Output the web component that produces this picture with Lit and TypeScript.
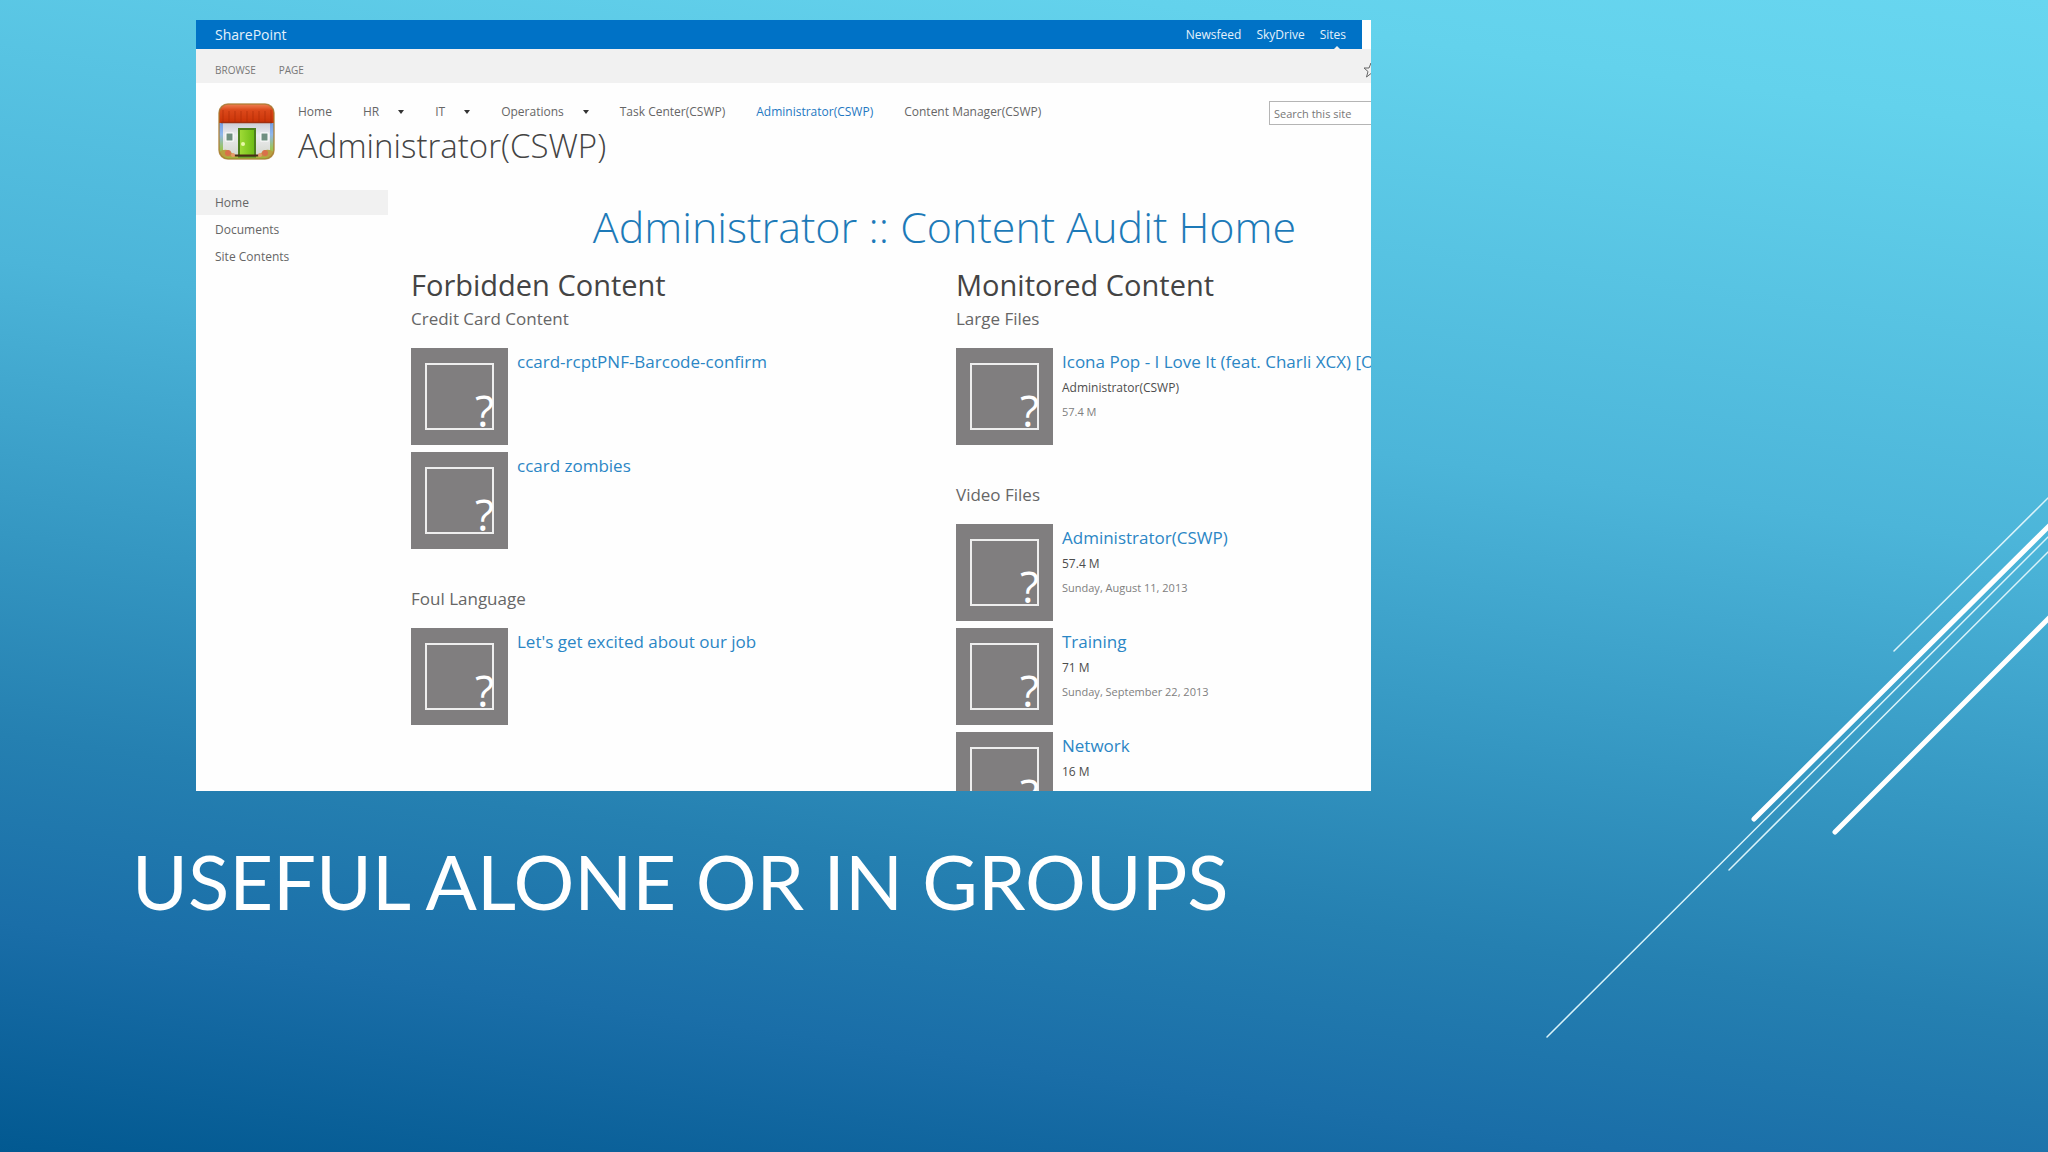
import { LitElement, html, svg, css, nothing } from "lit";
import { customElement, property } from "lit/decorators.js";

interface Result {
  title: string;
  line1?: string;
  line2?: string;
}

interface Group {
  name: string;
  items: Result[];
}

interface Column {
  title: string;
  groups: Group[];
}

const NAV: { label: string; menu?: boolean; current?: boolean }[] = [
  { label: "Home" },
  { label: "HR", menu: true },
  { label: "IT", menu: true },
  { label: "Operations", menu: true },
  { label: "Task Center(CSWP)" },
  { label: "Administrator(CSWP)", current: true },
  { label: "Content Manager(CSWP)" },
];

const SIDE = ["Home", "Documents", "Site Contents"];

const COLUMNS: Column[] = [
  {
    title: "Forbidden Content",
    groups: [
      {
        name: "Credit Card Content",
        items: [{ title: "ccard-rcptPNF-Barcode-confirm" }, { title: "ccard zombies" }],
      },
      { name: "Foul Language", items: [{ title: "Let's get excited about our job" }] },
    ],
  },
  {
    title: "Monitored Content",
    groups: [
      {
        name: "Large Files",
        items: [
          {
            title: "Icona Pop - I Love It (feat. Charli XCX) [O",
            line1: "Administrator(CSWP)",
            line2: "57.4 M",
          },
        ],
      },
      {
        name: "Video Files",
        items: [
          { title: "Administrator(CSWP)", line1: "57.4 M", line2: "Sunday, August 11, 2013" },
          { title: "Training", line1: "71 M", line2: "Sunday, September 22, 2013" },
          { title: "Network", line1: "16 M" },
        ],
      },
    ],
  },
];

/* One search hit: placeholder thumbnail, linked title, up to two detail lines. */
@customElement("result-item")
export class ResultItem extends LitElement {
  @property({ attribute: false }) result!: Result;

  static styles = css`
    :host {
      display: flex;
      gap: 9px;
    }
    .thumb {
      flex: none;
      display: block;
      width: 97px;
      height: 97px;
      background: #807e7f;
    }
    .mark {
      font: 400 44px "Open Sans", "Noto Sans", sans-serif;
      fill: #fff;
    }
    .text {
      white-space: nowrap;
    }
    .title,
    .line1,
    .line2 {
      display: block;
      margin: 0;
      line-height: 24px;
    }
    .title {
      font-size: 17px;
      line-height: 28px;
      color: #2b86c5;
      text-decoration: none;
    }
    .line1 {
      font-size: 12px;
      color: #4d4d4d;
    }
    .line2 {
      font-size: 11px;
      color: #808080;
    }
  `;

  render() {
    const { title, line1, line2 } = this.result;
    return html`
      <svg class="thumb" viewBox="0 0 97 97" aria-hidden="true">
        <rect x="15" y="16" width="67" height="65" fill="none" stroke="#eeeeee" stroke-width="2" />
        <text class="mark" x="64" y="79">?</text>
      </svg>
      <div class="text">
        <a class="title" href="#">${title}</a>
        ${line1 ? html`<p class="line1">${line1}</p>` : nothing}
        ${line2 ? html`<p class="line2">${line2}</p>` : nothing}
      </div>
    `;
  }
}

const houseIcon = svg`
  <defs>
    <linearGradient id="roof" x1="0" y1="0" x2="0" y2="1">
      <stop offset="0" stop-color="#f08a5c" />
      <stop offset="0.35" stop-color="#dc4a1c" />
      <stop offset="1" stop-color="#c93206" />
    </linearGradient>
    <linearGradient id="sky" x1="0" y1="0" x2="0" y2="1">
      <stop offset="0" stop-color="#4b78d8" />
      <stop offset="0.55" stop-color="#8fb7ec" />
      <stop offset="0.8" stop-color="#9ac55a" />
      <stop offset="1" stop-color="#c2a038" />
    </linearGradient>
    <linearGradient id="wall" x1="0" y1="0" x2="0" y2="1">
      <stop offset="0" stop-color="#c9cbd4" />
      <stop offset="0.4" stop-color="#ececf0" />
      <stop offset="1" stop-color="#d5d8cf" />
    </linearGradient>
    <linearGradient id="door" x1="0" y1="0" x2="1" y2="0">
      <stop offset="0" stop-color="#a2dc38" />
      <stop offset="1" stop-color="#6cbb14" />
    </linearGradient>
    <clipPath id="tile"><rect x="1" y="1" width="55" height="55" rx="9" /></clipPath>
  </defs>
  <g clip-path="url(#tile)">
    <rect width="57" height="57" fill="url(#sky)" />
    <path d="M5 19H52V52H5Z" fill="url(#wall)" />
    <rect x="0" y="0" width="57" height="20" fill="url(#roof)" />
    <path d="M5 7V19M11 8V19M17 8V19M23 8V19M29 8V19M35 8V19M41 8V19M47 8V19M53 7V19" stroke="#a82a06" stroke-width="1" opacity="0.6" />
    <path d="M3 19.500H54" stroke="#a03010" stroke-width="1.500" />
    <rect x="8" y="30" width="7" height="8" fill="#6f8f80" stroke="#fff" />
    <rect x="43" y="30" width="7" height="8" fill="#6f8f80" stroke="#fff" />
    <rect x="21" y="26" width="16" height="28" fill="url(#door)" stroke="#4d7f1c" stroke-width="2" />
    <circle cx="25" cy="41" r="2" fill="#e8f8a8" />
    <path d="M14 52.500H44" stroke="#4a2c18" stroke-width="2" />
    <path d="M0 57V50Q8 43 15 51L20 57Z" fill="#b8a040" />
    <path d="M57 57V50Q49 43 42 51L37 57Z" fill="#b8a040" />
    <circle cx="10" cy="50" r="3" fill="#d9704a" />
    <circle cx="15" cy="52" r="2" fill="#e69a6a" />
    <circle cx="47" cy="50" r="3" fill="#d9704a" />
    <circle cx="42" cy="52" r="2" fill="#e69a6a" />
    <path d="M0 55.500H57" stroke="#8fc63c" stroke-width="2" />
  </g>
  <rect x="1" y="1" width="55" height="55" rx="9" fill="none" stroke="#a8782c" stroke-width="1.500" opacity="0.8" />
`;

@customElement("app-root")
export class AppRoot extends LitElement {
  static styles = css`
    :host {
      display: block;
    }
    .slide {
      position: relative;
      display: grid;
      grid-template-columns: 196fr 1175fr 677fr;
      grid-template-rows: 20fr 771fr 361fr;
      height: 100vh;
      overflow: hidden;
      background: linear-gradient(
        188deg,
        #68d6f0 0%,
        #63d2ec 9%,
        #4cb5d9 38%,
        #3597c2 57%,
        #2580b1 71%,
        #1a6ea8 84%,
        #025991 100%
      );
    }
    .rays {
      position: absolute;
      inset: 0;
      width: 100%;
      height: 100%;
      fill: none;
      stroke: #fff;
      stroke-linecap: round;
      pointer-events: none;
    }
    .thin {
      stroke: #d9f3fa;
      stroke-width: 1.5;
    }
    .thick {
      stroke-width: 5;
    }
    .shot {
      grid-area: 2 / 2;
      min-width: 0;
      overflow: hidden;
      background: #fefefe;
      color: #666;
      font: 12px/18px "Open Sans", "Noto Sans", sans-serif;
    }
    .page {
      width: calc(100% + 107px);
    }
    a {
      color: inherit;
      text-decoration: none;
    }
    .suite {
      display: flex;
      align-items: center;
      gap: 15px;
      height: 29px;
      margin-right: 116px;
      padding: 0 16px 0 19px;
      background: #0072c6;
      color: #e4f1fb;
      box-sizing: border-box;
    }
    .brand {
      margin-right: auto;
      font-size: 14px;
    }
    .active {
      position: relative;
    }
    .active::after {
      content: "";
      position: absolute;
      left: 50%;
      bottom: -6px;
      border: 4px solid transparent;
      border-top: 0;
      border-bottom-color: #f1f1f1;
    }
    .ribbon {
      display: flex;
      align-items: center;
      gap: 23px;
      height: 34px;
      box-sizing: border-box;
      padding: 8px 0 0 19px;
      background: #f1f1f1;
      font-size: 10px;
    }
    .tab {
      padding: 0;
      border: 0;
      background: none;
      color: #777;
      font: inherit;
    }
    .follow {
      margin-left: auto;
      margin-right: 99px;
      padding: 0;
      border: 0;
      background: none;
      line-height: 0;
    }
    .star {
      width: 16px;
      height: 16px;
      fill: none;
      stroke: #666;
    }
    .head {
      display: flex;
      gap: 23px;
      padding: 20px 0 19px 22px;
    }
    .logo {
      flex: none;
      width: 57px;
      height: 57px;
    }
    .grow {
      flex: 1;
    }
    .nav {
      display: flex;
      gap: 31px;
      white-space: nowrap;
    }
    .entry {
      display: flex;
      align-items: center;
      gap: 19px;
    }
    .caret {
      border: 3px solid transparent;
      border-top: 4px solid #333;
      border-bottom: 0;
    }
    .current {
      color: #1f78c2;
    }
    .site {
      margin: 0;
      font-size: 33px;
      line-height: 50px;
      font-weight: 300;
      color: #444;
    }
    .search {
      width: 209px;
      height: 24px;
      box-sizing: border-box;
      margin-top: -2px;
      padding: 0 4px;
      border: 1px solid #b5b5b5;
      background: #fff;
      font: 11px "Open Sans", "Noto Sans", sans-serif;
    }
    .search::placeholder {
      color: #777;
      opacity: 1;
    }
    .body {
      display: grid;
      grid-template-columns: 192px 1fr;
      column-gap: 23px;
    }
    .side {
      display: flex;
      flex-direction: column;
      gap: 2px;
    }
    .side-link {
      padding-left: 19px;
      line-height: 25px;
    }
    .here {
      background: #f1f1f1;
    }
    .main {
      padding-top: 8px;
    }
    .headline {
      margin: 0 0 10px;
      text-align: center;
      font-size: 43px;
      line-height: 58px;
      font-weight: 300;
      color: #1d7ab8;
    }
    .columns {
      display: grid;
      grid-template-columns: 1fr 1fr;
      column-gap: 23px;
    }
    .column {
      min-width: 0;
    }
    .section {
      margin: 0 0 2px;
      font-size: 29px;
      line-height: 37px;
      font-weight: 400;
      color: #444;
    }
    .group {
      display: flex;
      flex-direction: column;
      gap: 7px;
      margin-bottom: 36px;
    }
    .group-name {
      margin: 0 0 8px;
      font-size: 17px;
      line-height: 28px;
      font-weight: 400;
      color: #666;
    }
    .caption {
      grid-area: 3 / 1 / 4 / 4;
      margin: 0;
      padding: 42px 0 0 132px;
      font: 400 76px/96px Lato, "Open Sans", sans-serif;
      text-transform: uppercase;
      color: #fff;
    }
  `;

  private column(c: Column) {
    return html`
      <section class="column">
        <h3 class="section">${c.title}</h3>
        ${c.groups.map(
          (g) => html`
            <div class="group">
              <h4 class="group-name">${g.name}</h4>
              ${g.items.map((r) => html`<result-item .result=${r}></result-item>`)}
            </div>
          `,
        )}
      </section>
    `;
  }

  render() {
    return html`
      <main class="slide">
        <svg class="rays" viewBox="0 0 2048 1152" preserveAspectRatio="none" aria-hidden="true">
          <path class="thin" d="M1894 651L2050 496M1547 1037L2050 535M1729 870L2050 550" />
          <path class="thick" d="M1754 819L2050 525M1835 832L2050 617" />
        </svg>

        <div class="shot">
          <div class="page">
            <div class="suite">
              <a class="brand" href="#">SharePoint</a>
              <a href="#">Newsfeed</a>
              <a href="#">SkyDrive</a>
              <a class="active" href="#">Sites</a>
            </div>
            <div class="ribbon">
              <button class="tab" type="button">BROWSE</button>
              <button class="tab" type="button">PAGE</button>
              <button class="follow" type="button" aria-label="Follow">
                <svg class="star" viewBox="0 0 16 16">
                  <path d="M8 1L10 6H15L11 9.500L12.500 15L8 11.500L3.500 15L5 9.500L1 6H6Z" />
                </svg>
              </button>
            </div>
            <header class="head">
              <svg class="logo" viewBox="0 0 57 57" aria-hidden="true">${houseIcon}</svg>
              <div class="grow">
                <nav class="nav">
                  ${NAV.map(
                    (n) => html`
                      <a class="entry ${n.current ? "current" : ""}" href="#"
                        >${n.label}${n.menu ? html`<span class="caret"></span>` : nothing}</a
                      >
                    `,
                  )}
                </nav>
                <h1 class="site">Administrator(CSWP)</h1>
              </div>
              <input class="search" type="search" placeholder="Search this site" aria-label="Search this site" />
            </header>
            <div class="body">
              <nav class="side">
                ${SIDE.map(
                  (s, i) => html`<a class="side-link ${i === 0 ? "here" : ""}" href="#">${s}</a>`,
                )}
              </nav>
              <div class="main">
                <h2 class="headline">Administrator :: Content Audit Home</h2>
                <div class="columns">${COLUMNS.map((c) => this.column(c))}</div>
              </div>
            </div>
          </div>
        </div>

        <h2 class="caption">Useful alone or in groups</h2>
      </main>
    `;
  }
}
